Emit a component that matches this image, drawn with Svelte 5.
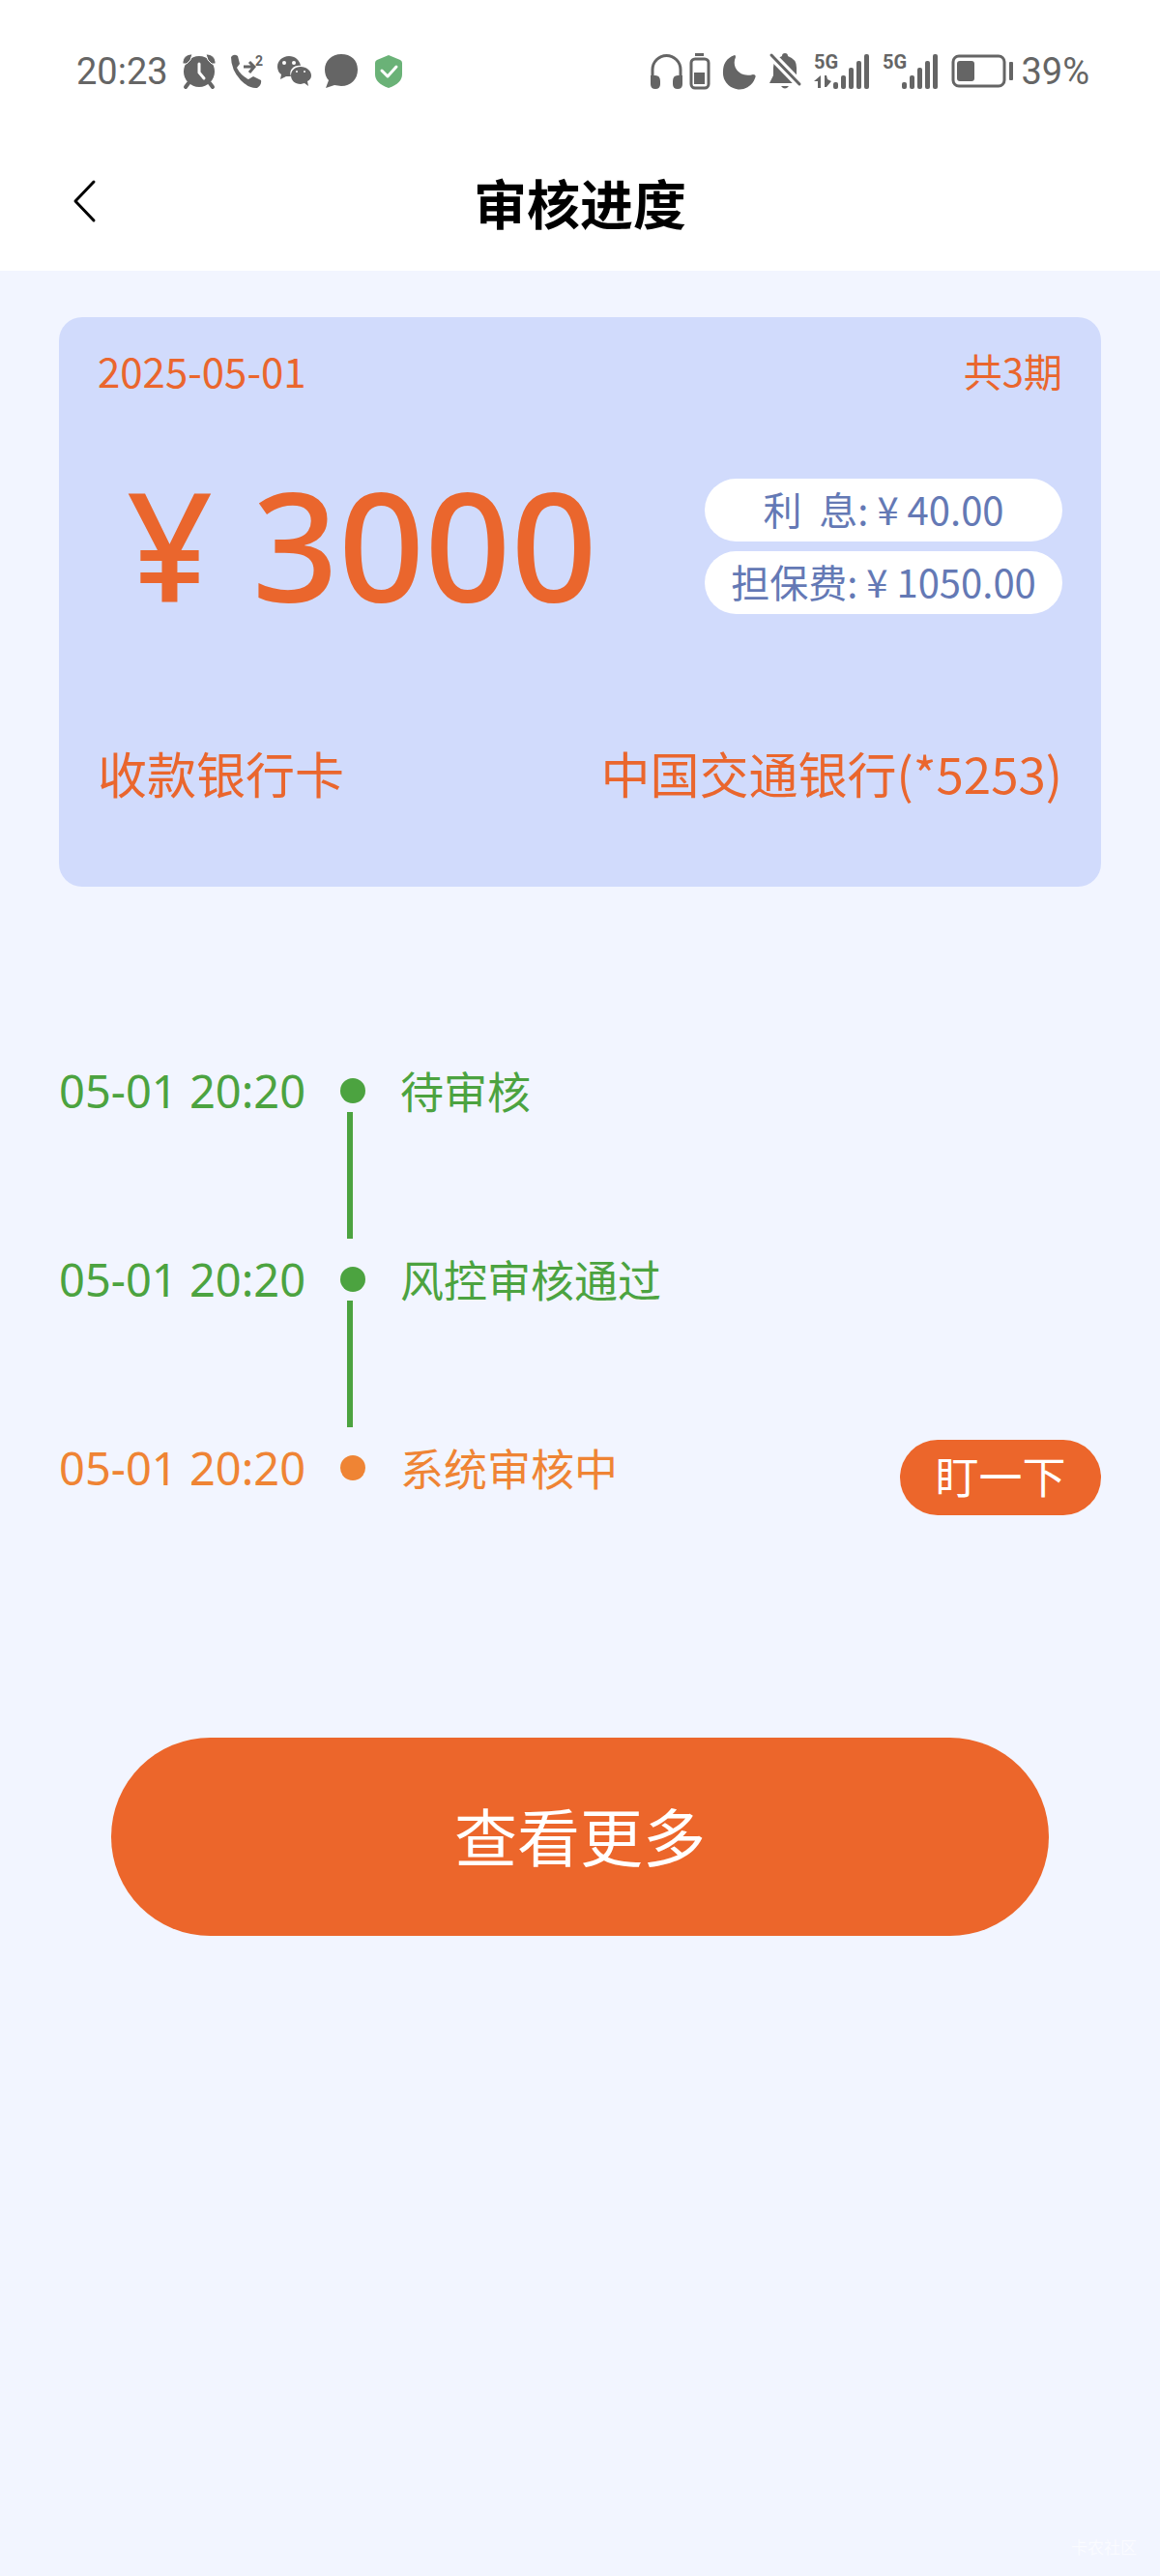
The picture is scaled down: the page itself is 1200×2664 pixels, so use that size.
<script>
  const loan = {
    date: '2025-05-01',
    periods: '共3期',
    amount: '¥ 3000',
    bank: '中国交通银行(*5253)'
  };

  const fees = [
    { label: '利  息:', value: '¥ 40.00' },
    { label: '担保费:', value: '¥ 1050.00' }
  ];

  const steps = [
    { time: '05-01 20:20', label: '待审核', done: true },
    { time: '05-01 20:20', label: '风控审核通过', done: true },
    { time: '05-01 20:20', label: '系统审核中', done: false }
  ];
</script>

{#snippet signal(data)}
  <svg width="58" height="38" viewBox="0 0 58 38" fill="currentColor">
    <text x="0" y="16" class="net">5G</text>
    {#if data}
      <path d="M7 23v13H4v-7H0zM11 23h2l1 4 4 2-5 6h-2z" />
    {/if}
    <rect x="20" y="30" width="5" height="7" rx="2" />
    <rect x="28" y="23" width="5" height="14" rx="2" />
    <rect x="36" y="15" width="5" height="22" rx="2" />
    <rect x="44" y="8" width="5" height="29" rx="2" />
    <rect x="52" y="1" width="5" height="36" rx="2" />
  </svg>
{/snippet}

<div class="page">
  <div class="status">
    <div class="group left">
      <span class="clock">20:23</span>
      <!-- alarm -->
      <svg width="34" height="36" viewBox="0 0 34 36">
        <circle cx="17" cy="18" r="16" fill="currentColor" />
        <path d="M0 10A9 9 0 0 1 10 0L8 6 4 10zM34 10A9 9 0 0 0 24 0l2 6 4 4z" fill="currentColor" stroke="#fff" stroke-width="1" />
        <path d="M6 30l-3 4M28 30l3 4" stroke="currentColor" stroke-width="4" stroke-linecap="round" />
        <path d="M17 10v9l5 6" fill="none" stroke="#fff" stroke-width="3" stroke-linecap="round" />
      </svg>
      <!-- call forwarding -->
      <svg width="34" height="36" viewBox="0 0 34 36">
        <path d="M1 3Q4-1 8 2l2 8-3 4q4 8 12 12l5-3 8 4q1 5-4 8-8 1-17-8Q1 16 1 3z" fill="currentColor" />
        <path d="M14 13h11M20 8l5 5-5 6" fill="none" stroke="currentColor" stroke-width="3" />
        <text x="26" y="12" class="sup">2</text>
      </svg>
      <!-- wechat -->
      <svg width="34" height="36" viewBox="0 0 34 36" fill="currentColor">
        <path d="M12 2C5 2 0 7 0 13q0 5 4 8l-1 5 6-3h5C11 16 18 11 24 12 23 6 18 2 12 2z" />
        <path d="M24 13c-6 0-10 4-10 9s4 9 10 9l4-1 4 3-1-5q4-2 4-6c0-5-5-9-11-9z" />
        <g fill="#fff">
          <circle cx="7" cy="9" r="2" />
          <circle cx="17" cy="9" r="2" />
          <circle cx="20" cy="18" r="1" />
          <circle cx="28" cy="18" r="1" />
        </g>
      </svg>
      <!-- message -->
      <svg width="34" height="36" viewBox="0 0 34 36">
        <path d="M17 0C7 0 0 7 0 16q0 7 4 11l-3 8 9-3 7 1c10 0 17-7 17-17S27 0 17 0z" fill="currentColor" />
      </svg>
      <!-- shield -->
      <svg width="34" height="36" viewBox="0 0 34 36">
        <path d="M17 1l12 5q2 1 2 3v12q0 9-14 14Q3 30 3 21V9q0-2 2-3z" fill="#6ab277" />
        <path d="M10 17l6 6 9-10" fill="none" stroke="#fff" stroke-width="3" stroke-linecap="round" stroke-linejoin="round" />
      </svg>
    </div>

    <div class="group right">
      <!-- headphones with battery -->
      <svg width="62" height="38" viewBox="0 0 62 38">
        <path d="M2 27V17a14 14 0 0 1 29 0v10" fill="none" stroke="currentColor" stroke-width="3" />
        <path d="M0 23h5q5 0 5 6v3q0 5-5 5t-5-5zM33 23h-5q-5 0-5 6v3q0 5 5 5t5-5z" fill="currentColor" />
        <rect x="42" y="6" width="18" height="30" rx="4" fill="none" stroke="currentColor" stroke-width="3" />
        <path d="M46 0h9v3h-9zM45 20h11v12H45z" fill="currentColor" />
      </svg>
      <!-- do not disturb -->
      <svg width="35" height="38" viewBox="0 0 35 38">
        <path d="M12 2C3 5 0 12 0 19a17 17 0 0 0 33 7q2-4-2-4C18 26 8 15 13 4q0-2-1-2z" fill="currentColor" />
      </svg>
      <!-- muted -->
      <svg width="33" height="38" viewBox="0 0 33 38">
        <path d="M16 0q3 0 3 3 9 3 9 12v8l4 8H0l4-8v-8Q4 6 13 3q0-3 3-3zM12 34h8q-4 5-8 0z" fill="currentColor" />
        <path d="M0 0l33 34" stroke="#fff" stroke-width="9" />
        <path d="M2 2l29 30" stroke="currentColor" stroke-width="3" stroke-linecap="round" />
      </svg>
      {@render signal(true)}
      {@render signal(false)}
      <div class="power">
        <svg width="64" height="38" viewBox="0 0 64 38">
          <rect x="2" y="3" width="53" height="31" rx="6" fill="none" stroke="currentColor" stroke-width="3" />
          <rect x="6" y="8" width="18" height="21" rx="3" fill="currentColor" />
          <rect x="60" y="9" width="4" height="19" rx="1" fill="currentColor" />
        </svg>
        <span>39%</span>
      </div>
    </div>
  </div>

  <header>
    <button class="back" aria-label="返回">
      <svg width="24" height="44" viewBox="0 0 24 44">
        <path d="M21 2L2 22l19 20" fill="none" stroke="#000" stroke-width="3" stroke-linecap="round" stroke-linejoin="round" />
      </svg>
    </button>
    <h1>审核进度</h1>
  </header>

  <main>
    <section class="card">
      <div class="row meta">
        <time>{loan.date}</time>
        <span>{loan.periods}</span>
      </div>
      <div class="row money">
        <strong>{loan.amount}</strong>
        <div class="fees">
          {#each fees as fee}
            <span class="fee">{fee.label}{' ' + fee.value}</span>
          {/each}
        </div>
      </div>
      <div class="row bank">
        <span>收款银行卡</span>
        <span>{loan.bank}</span>
      </div>
    </section>

    <ol class="steps">
      {#each steps as step, i}
        <li class:done={step.done}>
          <time>{step.time}</time>
          <div class="marker">
            <i class="dot"></i>
            {#if i < steps.length - 1}<i class="line"></i>{/if}
          </div>
          <span class="label">{step.label}</span>
          {#if !step.done}<button class="nudge">盯一下</button>{/if}
        </li>
      {/each}
    </ol>

    <button class="more">查看更多</button>
  </main>

  <footer>卡农社区</footer>
</div>

<style>
  :global(body) { margin: 0; background: #f2f5ff; }
  .page {
    min-height: 100vh;
    display: flex;
    flex-direction: column;
    box-sizing: border-box;
    font-family: 'Noto Sans CJK SC', sans-serif;
    color: #ea662d;
  }
  button { border: 0; padding: 0; font-family: inherit; cursor: pointer; }
  svg { display: block; flex: none; overflow: visible; }

  .status {
    height: 148px;
    padding: 0 73px 0 79px;
    display: flex;
    justify-content: space-between;
    align-items: center;
    background: #fff;
    color: #656565;
    font-family: Roboto, sans-serif;
    font-size: 38px;
  }
  .group { display: flex; align-items: center; }
  .left { gap: 15px; }
  .right { gap: 13px; }
  .power { display: flex; align-items: center; gap: 8px; }
  .net { font-size: 20px; font-weight: 700; }
  .sup { font-size: 14px; font-weight: 700; fill: currentColor; }

  header {
    display: grid;
    grid-template-columns: 1fr auto 1fr;
    align-items: center;
    height: 120px;
    padding: 0 76px 12px;
    background: #fff;
  }
  .back { justify-self: start; background: none; }
  h1 { margin: 0; color: #000; font-size: 55px; font-weight: 700; line-height: 80px; }

  main { padding: 48px 61px 0; }
  .card { padding: 27px 40px 83px; border-radius: 24px; background: #d1dbfc; }
  .row { display: flex; justify-content: space-between; align-items: center; }
  .meta { font-size: 40px; line-height: 56px; }
  .meta time { font-size: 42px; }
  .money { margin: 84px 0 129px; }
  strong {
    padding: 0 0 6px 30px;
    font-family: 'Noto Sans', sans-serif;
    font-size: 156px;
    font-weight: 500;
    line-height: 134px;
  }
  .fees { display: flex; flex-direction: column; gap: 10px; width: 370px; }
  .fee {
    padding-bottom: 2px;
    border-radius: 33px;
    background: #fff;
    color: #6479b5;
    font-size: 40px;
    line-height: 63px;
    text-align: center;
    white-space: pre;
  }
  .bank { font-size: 51px; line-height: 70px; }

  .steps { list-style: none; margin: 172px 0 230px; padding: 0; }
  li { display: flex; align-items: flex-start; line-height: 78px; color: #ef8434; }
  li.done { height: 195px; color: #4ca340; }
  li time { width: 291px; font-family: 'Noto Sans', sans-serif; font-size: 47px; }
  .marker { width: 62px; padding-top: 26px; }
  .dot { display: block; width: 26px; height: 26px; border-radius: 50%; background: currentColor; }
  .line { display: block; width: 6px; height: 131px; margin: 9px 0 0 7px; background: currentColor; }
  .label { font-size: 45px; }
  .nudge {
    width: 208px;
    margin: 10px 0 0 auto;
    padding-bottom: 4px;
    border-radius: 39px;
    background: #ec662b;
    color: #fff;
    font-size: 45px;
    line-height: 74px;
  }
  .more {
    display: block;
    width: 90%;
    margin: 0 auto;
    padding-bottom: 4px;
    border-radius: 103px;
    background: #ec662b;
    color: #fff;
    font-size: 65px;
    line-height: 201px;
  }
  footer {
    margin-top: auto;
    padding: 0 24px 16px;
    color: #fafbff;
    font-size: 17px;
    line-height: 28px;
    text-align: right;
  }
</style>
